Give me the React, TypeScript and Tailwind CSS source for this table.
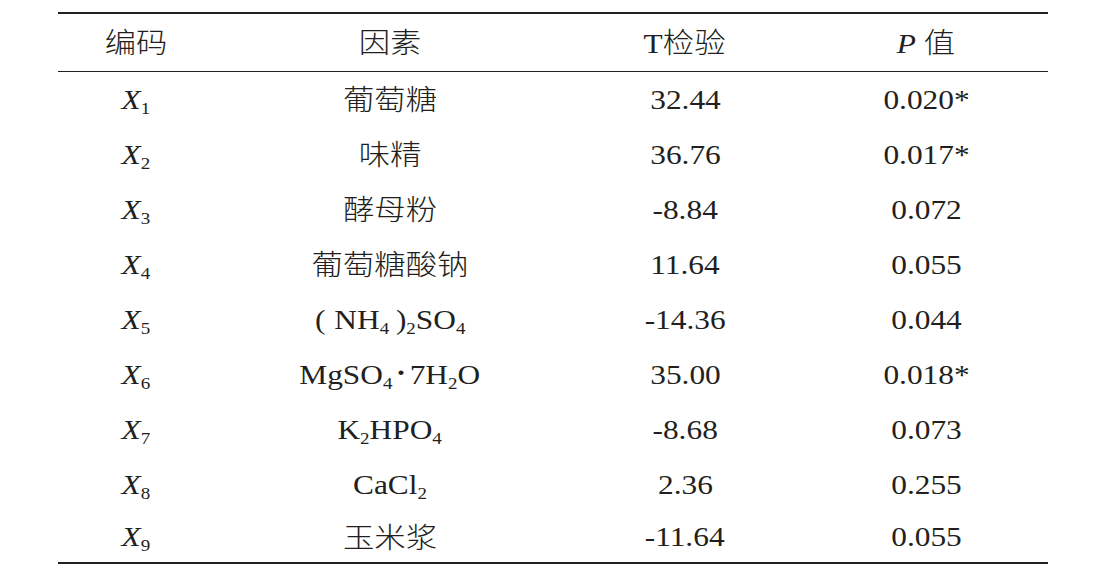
import React from "react";

const FONT = "[font-family:Liberation_Serif,Noto_Sans_CJK_SC,serif]";

function Sub({ children }: { children: React.ReactNode }) {
  return <span className="text-[17px] relative top-[5px] leading-none">{children}</span>;
}

function XCode({ n }: { n: number }) {
  return (
    <span>
      <span className="italic">X</span>
      <Sub>{n}</Sub>
    </span>
  );
}

function Cell({ children }: { children: React.ReactNode }) {
  return (
    <div className="flex items-center justify-center">
      <span className="inline-block scale-x-[1.12] whitespace-nowrap leading-[32px]">{children}</span>
    </div>
  );
}

const CJK = "[font-family:Noto_Sans_CJK_SC,sans-serif] font-light";

const rows: { factor: React.ReactNode; t: string; p: string }[] = [
  { factor: <span className={CJK}>葡萄糖</span>, t: "32.44", p: "0.020*" },
  { factor: <span className={CJK}>味精</span>, t: "36.76", p: "0.017*" },
  { factor: <span className={CJK}>酵母粉</span>, t: "-8.84", p: "0.072" },
  { factor: <span className={CJK}>葡萄糖酸钠</span>, t: "11.64", p: "0.055" },
  {
    factor: (
      <span>
        <span className="mr-[8px]">(</span>NH<Sub>4</Sub>
        <span className="ml-[6px]">)</span>
        <Sub>2</Sub>SO<Sub>4</Sub>
      </span>
    ),
    t: "-14.36",
    p: "0.044",
  },
  {
    factor: (
      <span>
        MgSO<Sub>4</Sub>
        <span className="mx-[3px] relative top-[-2px] font-bold">·</span>7H<Sub>2</Sub>O
      </span>
    ),
    t: "35.00",
    p: "0.018*",
  },
  {
    factor: (
      <span>
        K<Sub>2</Sub>HPO<Sub>4</Sub>
      </span>
    ),
    t: "-8.68",
    p: "0.073",
  },
  {
    factor: (
      <span>
        CaCl<Sub>2</Sub>
      </span>
    ),
    t: "2.36",
    p: "0.255",
  },
  { factor: <span className={CJK}>玉米浆</span>, t: "-11.64", p: "0.055" },
];

export default function App() {
  return (
    <div className={`w-[1098px] h-[577px] bg-white text-[#231f20] text-[28px] ${FONT} pt-[12px] pl-[58px]`}>
      <div className="w-[990px]">
        <div className="h-[2px] bg-[#231f20]" />
        <div className="grid grid-cols-[156px_352px_238px_244px] h-[57px]">
          <Cell>
            <span className={CJK}>编码</span>
          </Cell>
          <Cell>
            <span className={CJK}>因素</span>
          </Cell>
          <Cell>
            <span>
              T<span className={CJK}>检验</span>
            </span>
          </Cell>
          <Cell>
            <span>
              <span className="italic">P</span> <span className={CJK}>值</span>
            </span>
          </Cell>
        </div>
        <div className="h-px bg-[#231f20]" />
        <div className="grid grid-cols-[156px_352px_238px_244px] grid-rows-[repeat(8,55px)_50px] h-[490px]">
          {rows.map((r, i) => (
            <React.Fragment key={i}>
              <Cell>
                <XCode n={i + 1} />
              </Cell>
              <Cell>{r.factor}</Cell>
              <Cell>{r.t}</Cell>
              <Cell>{r.p}</Cell>
            </React.Fragment>
          ))}
        </div>
        <div className="h-[2px] bg-[#231f20]" />
      </div>
    </div>
  );
}
